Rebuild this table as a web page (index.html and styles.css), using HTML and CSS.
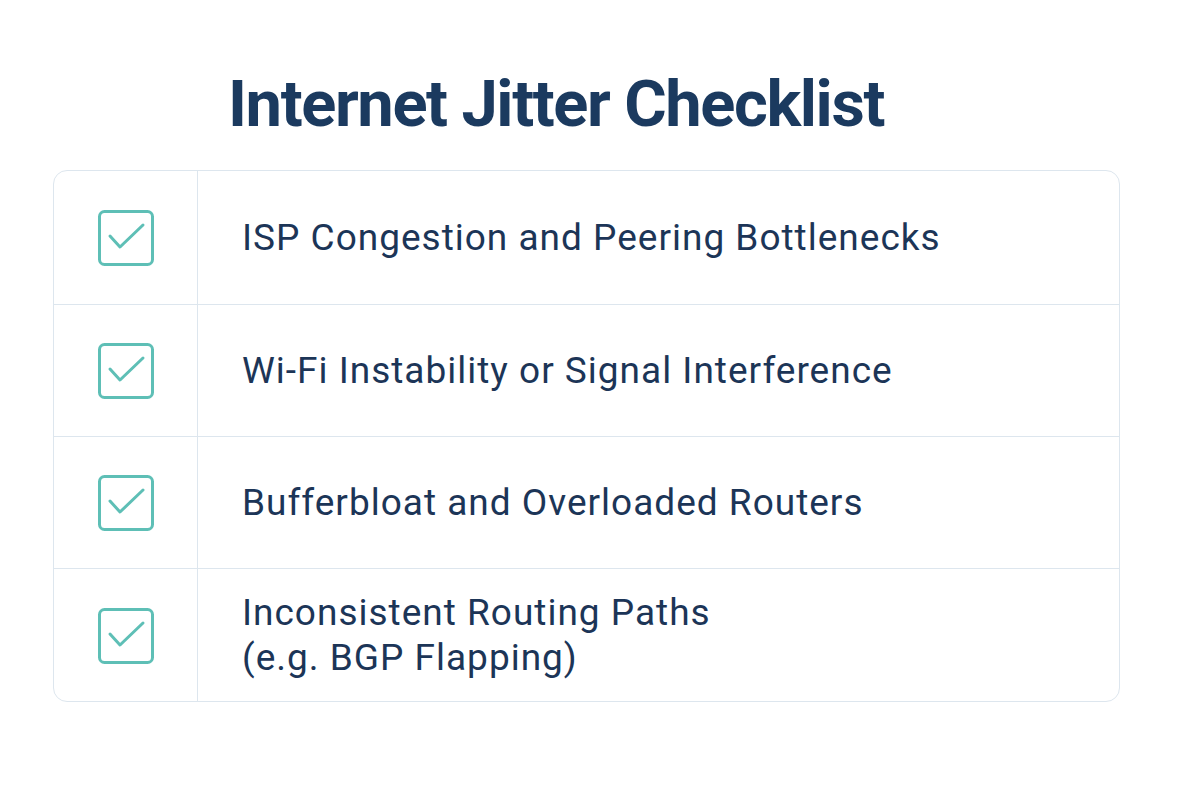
FILE: index.html
```html
<!DOCTYPE html>
<html lang="en">
<head>
<meta charset="utf-8">
<title>Internet Jitter Checklist</title>
<link rel="stylesheet" href="styles.css">
</head>
<body>
<main class="page">
  <h1 class="title">Internet Jitter Checklist</h1>
  <div class="card">
    <div class="row">
      <div class="cell-icon">
        <svg class="check" viewBox="0 0 56 56" width="56" height="56"><rect x="1.5" y="1.5" width="53" height="53" rx="5" fill="none" stroke="#5ebfb6" stroke-width="3"/><path d="M12 26 L22 37 L45 15" fill="none" stroke="#5ebfb6" stroke-width="3" stroke-linecap="round" stroke-linejoin="round"/></svg>
      </div>
      <div class="cell-text">ISP Congestion and Peering Bottlenecks</div>
    </div>
    <div class="row">
      <div class="cell-icon">
        <svg class="check" viewBox="0 0 56 56" width="56" height="56"><rect x="1.5" y="1.5" width="53" height="53" rx="5" fill="none" stroke="#5ebfb6" stroke-width="3"/><path d="M12 26 L22 37 L45 15" fill="none" stroke="#5ebfb6" stroke-width="3" stroke-linecap="round" stroke-linejoin="round"/></svg>
      </div>
      <div class="cell-text">Wi-Fi Instability or Signal Interference</div>
    </div>
    <div class="row">
      <div class="cell-icon">
        <svg class="check" viewBox="0 0 56 56" width="56" height="56"><rect x="1.5" y="1.5" width="53" height="53" rx="5" fill="none" stroke="#5ebfb6" stroke-width="3"/><path d="M12 26 L22 37 L45 15" fill="none" stroke="#5ebfb6" stroke-width="3" stroke-linecap="round" stroke-linejoin="round"/></svg>
      </div>
      <div class="cell-text">Bufferbloat and Overloaded Routers</div>
    </div>
    <div class="row">
      <div class="cell-icon">
        <svg class="check" viewBox="0 0 56 56" width="56" height="56"><rect x="1.5" y="1.5" width="53" height="53" rx="5" fill="none" stroke="#5ebfb6" stroke-width="3"/><path d="M12 26 L22 37 L45 15" fill="none" stroke="#5ebfb6" stroke-width="3" stroke-linecap="round" stroke-linejoin="round"/></svg>
      </div>
      <div class="cell-text">Inconsistent Routing Paths<br>(e.g. BGP Flapping)</div>
    </div>
  </div>
</main>
</body>
</html>
```

FILE: styles.css
```css
html, body {
  margin: 0;
  padding: 0;
  background: #ffffff;
}
body {
  font-family: Roboto, "Liberation Sans", sans-serif;
  color: #1c3557;
}
.page {
  width: 1200px;
  height: 800px;
  box-sizing: border-box;
  padding: 68px 0 0 53px;
}
.title {
  margin: 0 0 30px 175px;
  font-size: 65px;
  line-height: 72px;
  font-weight: 700;
  color: #1b3a5f;
  letter-spacing: -1.4px;
}
.card {
  width: 1067px;
  box-sizing: border-box;
  border: 1.5px solid #dde6ee;
  border-radius: 14px;
  display: flex;
  flex-direction: column;
}
.row {
  display: flex;
  box-sizing: border-box;
  height: 132px;
  border-bottom: 1.5px solid #dde6ee;
}
.row:first-child {
  height: 134px;
}
.row:last-child {
  border-bottom: none;
}
.cell-icon {
  width: 143px;
  flex: none;
  display: flex;
  align-items: center;
  justify-content: center;
  border-right: 1.5px solid #dde6ee;
}
.check {
  display: block;
  margin-left: 1px;
  margin-top: 1px;
}
.cell-text {
  flex: 1;
  display: flex;
  align-items: center;
  padding-left: 44px;
  font-size: 37px;
  line-height: 45px;
  letter-spacing: 1px;
  font-weight: 400;
  color: #1c3557;
}
```
